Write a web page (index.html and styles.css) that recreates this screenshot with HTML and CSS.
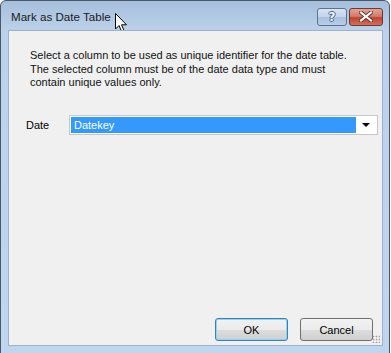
FILE: index.html
```html
<!DOCTYPE html>
<html lang="en">
<head>
    <meta charset="UTF-8" />
    <title>Mark as Date Table</title>
    <link rel="stylesheet" href="styles.css">
</head>
<body>
    <div class="window">
        <div class="titlebar">
            <span class="title">Mark as Date Table</span>
            <svg class="cursor" width="13" height="20" viewBox="0 0 13 20">
                <path d="M0.5 0.5 L0.5 16 L4 12.5 L6.5 18.5 L9 17.5 L6.5 11.8 L11.5 11.8 Z" fill="#fff" stroke="#000" stroke-width="1"/>
            </svg>
            <div class="caption-buttons">
                <button class="cap help">?</button>
                <button class="cap close">
                    <svg width="14" height="11" viewBox="0 0 14 11">
                        <path d="M2 1.5 L12 9.5 M12 1.5 L2 9.5" stroke="#6b2a22" stroke-width="4" stroke-linecap="square"/>
                        <path d="M2 1.5 L12 9.5 M12 1.5 L2 9.5" stroke="#fff" stroke-width="2.2" stroke-linecap="square"/>
                    </svg>
                </button>
            </div>
        </div>
        <div class="client">
            <p class="intro">Select a column to be used as unique identifier for the date table.<br>The selected column must be of the date data type and must<br>contain unique values only.</p>
            <div class="field">
                <label class="field-label">Date</label>
                <div class="combo">
                    <span class="combo-value">Datekey</span>
                    <span class="combo-arrow"></span>
                </div>
            </div>
            <div class="spacer"></div>
            <div class="actions">
                <button class="btn default">OK</button>
                <button class="btn">Cancel</button>
            </div>
            <span class="grip"></span>
        </div>
    </div>
</body>
</html>
```
FILE: styles.css
```css
* {
    box-sizing: border-box;
}
body {
    margin: 0;
    background-color: #ffffff;
    font-family: 'Liberation Sans', Arial, sans-serif;
    font-size: 11px;
    color: #000;
}
.window {
    width: 390px;
    height: 360px;
    border: 1px solid #49596b;
    border-radius: 6px 6px 0 0;
    background: linear-gradient(to bottom, #a6bfdc 0, #bcd2ea 30px, #c0d6ee 100%);
    display: flex;
    flex-direction: column;
    padding: 0 6px 0 7px;
}
.titlebar {
    height: 29px;
    display: flex;
    align-items: center;
    position: relative;
}
.title {
    font-family: 'Liberation Sans', Arial, sans-serif;
    font-size: 11.6px;
    color: #1a1a1a;
    padding-left: 3px;
    margin-top: 2px;
}
.cursor {
    position: absolute;
    left: 107px;
    top: 12px;
}
.caption-buttons {
    margin-left: auto;
    display: flex;
    gap: 2px;
    margin-top: 2px;
    margin-right: 0;
}
.cap {
    height: 18px;
    border: 1px solid #5d7290;
    border-radius: 3px;
    padding: 0;
    display: flex;
    align-items: center;
    justify-content: center;
}
.help {
    width: 30px;
    background: linear-gradient(to bottom, #d7e4f3 0, #c2d4ea 50%, #a9c0de 51%, #b8cde7 100%);
    color: #f4f7fb;
    font-family: 'DejaVu Sans', sans-serif;
    font-weight: bold;
    font-size: 12px;
    text-shadow: 1px 0 0 #4d6282, -1px 0 0 #4d6282, 0 1px 0 #4d6282, 0 -1px 0 #4d6282;
}
.close {
    width: 34px;
    border-color: #6d3a33;
    background: linear-gradient(to bottom, #e4a495 0, #d27c6a 45%, #c0432e 55%, #d0705c 100%);
}
.client {
    flex: 1;
    margin-bottom: 7px;
    background-color: #f0f0f0;
    border: 1px solid #9bb2cc;
    padding: 18px 9px 0 21px;
    display: flex;
    flex-direction: column;
    position: relative;
    max-height: 316px;
}
.intro {
    margin: 0;
    line-height: 13.5px;
    color: #111;
}
.field {
    display: flex;
    align-items: center;
    margin-top: 25px;
    margin-left: -4px;
}
.field-label {
    width: 43px;
}
.combo {
    flex: 1;
    height: 20px;
    background: #fff;
    border: 1px solid #c8c8c8;
    display: flex;
    align-items: center;
    padding: 1px;
    margin-right: -5px;
}
.combo-value {
    flex: 1;
    height: 100%;
    background-color: #3399ff;
    color: #fff;
    padding-left: 3px;
    line-height: 16px;
}
.combo-arrow {
    width: 20px;
    display: flex;
    justify-content: center;
}
.combo-arrow::before {
    content: "";
    border-left: 4px solid transparent;
    border-right: 4px solid transparent;
    border-top: 4px solid #000;
}
.spacer {
    flex: 1;
}
.actions {
    display: flex;
    justify-content: flex-end;
    gap: 12px;
    margin-bottom: 4px;
}
.btn {
    width: 73px;
    height: 23px;
    font-family: 'Liberation Sans', Arial, sans-serif;
    font-size: 11px;
    color: #000;
    border: 1px solid #707070;
    border-radius: 3px;
    background: linear-gradient(to bottom, #f2f2f2 0, #ebebeb 50%, #dddddd 51%, #cfcfcf 100%);
    padding: 0;
}
.btn.default {
    border-color: #3c7fb1;
    box-shadow: inset 0 0 0 1px #8fd3f7;
}
.grip {
    position: absolute;
    right: 2px;
    bottom: 2px;
    width: 8px;
    height: 8px;
    background-image: radial-gradient(circle, #a0a0a0 0.8px, transparent 1.1px);
    background-size: 3px 3px;
}
```
